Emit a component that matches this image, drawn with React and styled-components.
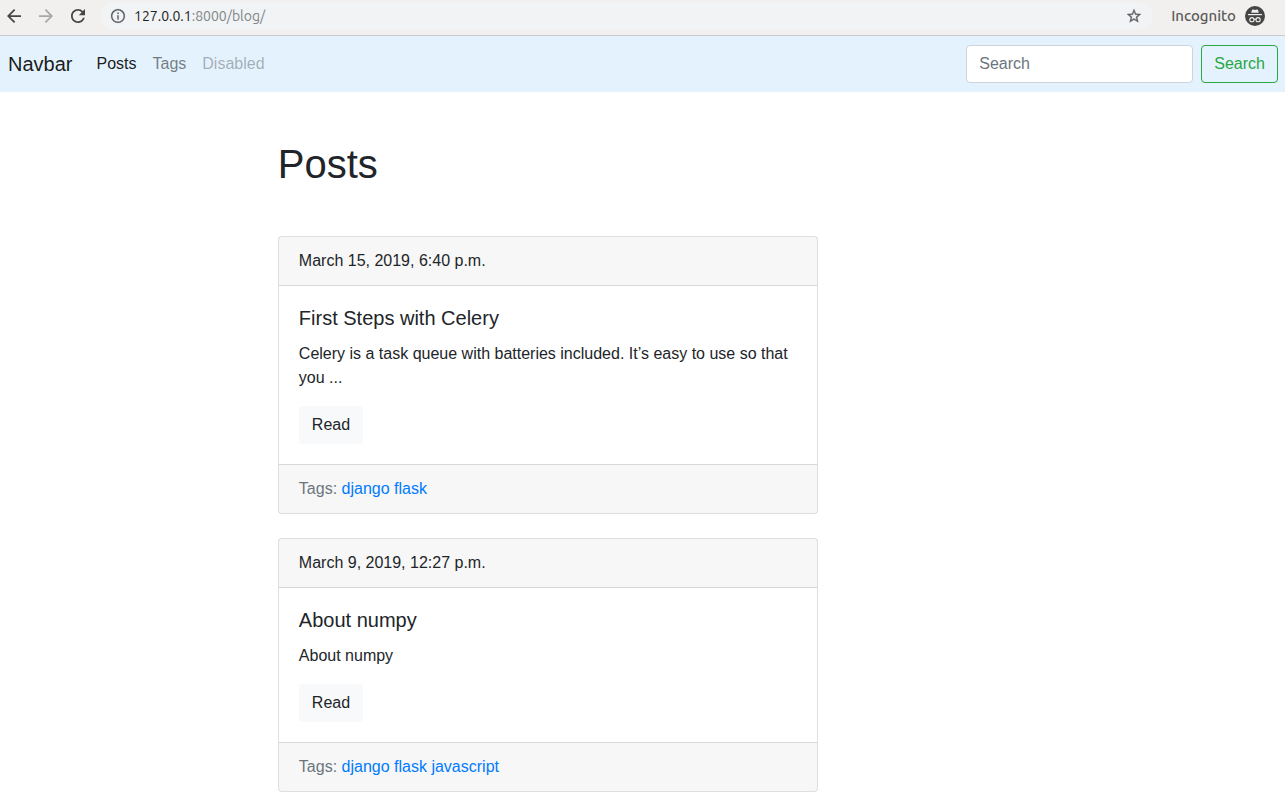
import React from "react";
import styled, { createGlobalStyle } from "styled-components";

const GlobalStyle = createGlobalStyle`
  *, *::before, *::after { box-sizing: border-box; }
  body {
    margin: 0;
    background: #fff;
    color: #212529;
    font-family: "Liberation Sans", Arial, sans-serif;
    font-size: 16px;
    line-height: 24px;
  }
  a { text-decoration: none; }
  button, input { font: inherit; margin: 0; }
`;

const BrowserBar = styled.header`
  display: flex;
  align-items: center;
  gap: 18px;
  height: 36px;
  padding: 0 20px 4px 7px;
  background: #f2f0ee;
  border-bottom: 1px solid #c8ccd1;
  font-family: Ubuntu, "Noto Sans", sans-serif;
  font-size: 14px;
  line-height: 20px;
`;

const IconButton = styled.button`
  display: flex;
  padding: 0;
  border: 0;
  background: none;
  color: ${(p) => p.$color || "#454545"};
`;

const AddressBar = styled.div`
  display: flex;
  flex: 1;
  align-items: center;
  gap: 9px;
  height: 28px;
  margin-left: -3px;
  padding: 0 12px 0 11px;
  border-radius: 14px;
  background: #f1f3f4;
`;

const Url = styled.div`
  flex: 1;
  color: #80868b;
  font-size: 14px;
  white-space: nowrap;
`;

const Host = styled.span`
  color: #202124;
`;

const Profile = styled.button`
  display: flex;
  align-items: center;
  gap: 9px;
  padding: 0;
  border: 0;
  background: none;
  color: #5a5a5a;
  font-size: 15px;
  font-weight: 500;
`;

const Navbar = styled.nav`
  display: flex;
  align-items: center;
  padding: 8px 7px 8px 8px;
  background: #e3f2fd;
`;

const Brand = styled.a`
  margin-right: 16px;
  color: rgba(0, 0, 0, 0.9);
  font-size: 20px;
  line-height: 30px;
`;

const NavList = styled.ul`
  display: flex;
  margin: 0 auto 0 0;
  padding: 0;
  list-style: none;
`;

const navColors = {
  active: "rgba(0, 0, 0, 0.9)",
  normal: "rgba(0, 0, 0, 0.5)",
  disabled: "rgba(0, 0, 0, 0.3)",
};

const NavLink = styled.a`
  display: block;
  padding: 8px;
  color: ${(p) => navColors[p.$state]};
`;

const SearchForm = styled.form`
  display: flex;
  gap: 8px;
`;

const SearchInput = styled.input`
  width: 227px;
  height: 38px;
  padding: 6px 12px;
  border: 1px solid #ced4da;
  border-radius: 4px;
  background: #fff;
  color: #495057;
  &::placeholder { color: #6c757d; opacity: 1; }
`;

const SearchButton = styled.button`
  height: 38px;
  padding: 6px 12px;
  border: 1px solid #28a745;
  border-radius: 4px;
  background: transparent;
  color: #28a745;
`;

const Container = styled.main`
  display: grid;
  grid-template-columns: repeat(6, 1fr);
  max-width: 1139px;
  margin: 0 auto;
`;

const Column = styled.div`
  grid-column: 2 / span 3;
  display: flex;
  flex-direction: column;
  gap: 24px;
  padding: 48px 14px 0 15px;
`;

const PageTitle = styled.h1`
  margin: 0 0 24px;
  font-size: 40px;
  font-weight: 500;
  line-height: 48px;
`;

const Card = styled.article`
  border: 1px solid rgba(0, 0, 0, 0.125);
  border-radius: 4px;
  background: #fff;
`;

const CardHeader = styled.div`
  padding: 12px 20px;
  border-bottom: 1px solid rgba(0, 0, 0, 0.125);
  background: rgba(0, 0, 0, 0.03);
`;

const CardBody = styled.div`
  padding: 20px;
`;

const CardTitle = styled.h2`
  margin: 0 0 12px;
  font-size: 20px;
  font-weight: 500;
  line-height: 24px;
`;

const CardText = styled.p`
  margin: 0 0 16px;
`;

const ReadLink = styled.a`
  display: block;
  width: fit-content;
  padding: 7px 13px;
  border-radius: 4px;
  background: #f8f9fa;
  color: #212529;
`;

const CardFooter = styled.div`
  padding: 12px 20px;
  border-top: 1px solid rgba(0, 0, 0, 0.125);
  background: rgba(0, 0, 0, 0.03);
  color: #6c757d;
`;

const TagLink = styled.a`
  color: #007bff;
`;

const Glyph = ({ d, viewBox = "4 4 16 16", size = 14, weight = 0 }) => (
  <svg
    width={size}
    height={size}
    viewBox={viewBox}
    fill="currentColor"
    stroke="currentColor"
    strokeWidth={weight}
    overflow="visible"
    aria-hidden="true"
  >
    <path d={d} />
  </svg>
);

const icons = {
  back: "M20 11H7.83l5.59-5.59L12 4l-8 8 8 8 1.41-1.41L7.83 13H20v-2z",
  forward: "M12 4l-1.41 1.41L16.17 11H4v2h12.17l-5.58 5.59L12 20l8-8z",
  reload:
    "M17.65 6.35C16.2 4.9 14.21 4 12 4c-4.42 0-7.99 3.58-7.99 8s3.57 8 7.99 8c3.73 0 6.84-2.55 7.73-6h-2.08c-.82 2.33-3.04 4-5.65 4-3.31 0-6-2.69-6-6s2.69-6 6-6c1.66 0 3.14.69 4.22 1.78L13 11h7V4l-2.35 2.35z",
  info:
    "M11 17h2v-6h-2v6zm1-15C6.48 2 2 6.48 2 12s4.48 10 10 10 10-4.48 10-10S17.52 2 12 2zm0 18c-4.41 0-8-3.59-8-8s3.59-8 8-8 8 3.59 8 8-3.59 8-8 8zM11 9h2V7h-2v2z",
  star:
    "M22 9.24l-7.19-.62L12 2 9.19 8.63 2 9.24l5.46 4.73L5.82 21 12 17.27 18.18 21l-1.63-7.03L22 9.24zM12 15.4l-3.76 2.27 1-4.28-3.32-2.88 4.38-.38L12 6.1l1.71 4.04 4.38.38-3.32 2.88 1 4.28L12 15.4z",
};

const IncognitoBadge = () => (
  <svg width="20" height="20" viewBox="0 0 20 20" aria-hidden="true">
    <circle cx="10" cy="10" r="10" fill="#454545" />
    <path d="M6.2 6.7 7 4.1q.3-.8 1.1-.5l1.9.5 1.9-.5q.8-.3 1.1.5l.8 2.6z" fill="#f2f0ee" />
    <path d="M3 8h14v1.2H3z" fill="#f2f0ee" />
    <g fill="none" stroke="#f2f0ee" strokeWidth="1.1">
      <circle cx="6.9" cy="13.7" r="2.1" />
      <circle cx="13.1" cy="13.7" r="2.1" />
      <path d="M9 13.4q1-.6 2 0" />
    </g>
  </svg>
);

const navItems = [
  { label: "Posts", state: "active" },
  { label: "Tags", state: "normal" },
  { label: "Disabled", state: "disabled" },
];

const posts = [
  {
    date: "March 15, 2019, 6:40 p.m.",
    title: "First Steps with Celery",
    text: "Celery is a task queue with batteries included. It’s easy to use so that you ...",
    tags: ["django", "flask"],
  },
  {
    date: "March 9, 2019, 12:27 p.m.",
    title: "About numpy",
    text: "About numpy",
    tags: ["django", "flask", "javascript"],
  },
];

const PostCard = ({ post }) => (
  <Card>
    <CardHeader>{post.date}</CardHeader>
    <CardBody>
      <CardTitle>{post.title}</CardTitle>
      <CardText>{post.text}</CardText>
      <ReadLink href="#read">Read</ReadLink>
    </CardBody>
    <CardFooter>
      Tags:
      {post.tags.map((tag) => (
        <React.Fragment key={tag}>
          {" "}
          <TagLink href={`#${tag}`}>{tag}</TagLink>
        </React.Fragment>
      ))}
    </CardFooter>
  </Card>
);

export default function App() {
  return (
    <>
      <GlobalStyle />
      <BrowserBar>
        <IconButton type="button" aria-label="Back"><Glyph d={icons.back} /></IconButton>
        <IconButton type="button" aria-label="Forward" $color="#aaa8a6"><Glyph d={icons.forward} /></IconButton>
        <IconButton type="button" aria-label="Reload"><Glyph d={icons.reload} /></IconButton>
        <AddressBar>
          <IconButton type="button" aria-label="Site information" $color="#5f6368">
            <Glyph d={icons.info} viewBox="2 2 20 20" weight={0.2} />
          </IconButton>
          <Url role="textbox" aria-label="Address" tabIndex={0}>
            <Host>127.0.0.1</Host>:8000/blog/
          </Url>
          <IconButton type="button" aria-label="Bookmark" $color="#5f6368">
            <Glyph d={icons.star} viewBox="2 2 20 20" weight={0.5} />
          </IconButton>
        </AddressBar>
        <Profile type="button">
          Incognito
          <IncognitoBadge />
        </Profile>
      </BrowserBar>
      <Navbar>
        <Brand href="#home">Navbar</Brand>
        <NavList>
          {navItems.map((item) => (
            <li key={item.label}>
              <NavLink href={`#${item.label.toLowerCase()}`} $state={item.state}>{item.label}</NavLink>
            </li>
          ))}
        </NavList>
        <SearchForm role="search">
          <SearchInput type="search" placeholder="Search" aria-label="Search" />
          <SearchButton type="submit">Search</SearchButton>
        </SearchForm>
      </Navbar>
      <Container>
        <Column>
          <PageTitle>Posts</PageTitle>
          {posts.map((post) => (
            <PostCard key={post.title} post={post} />
          ))}
        </Column>
      </Container>
    </>
  );
}
